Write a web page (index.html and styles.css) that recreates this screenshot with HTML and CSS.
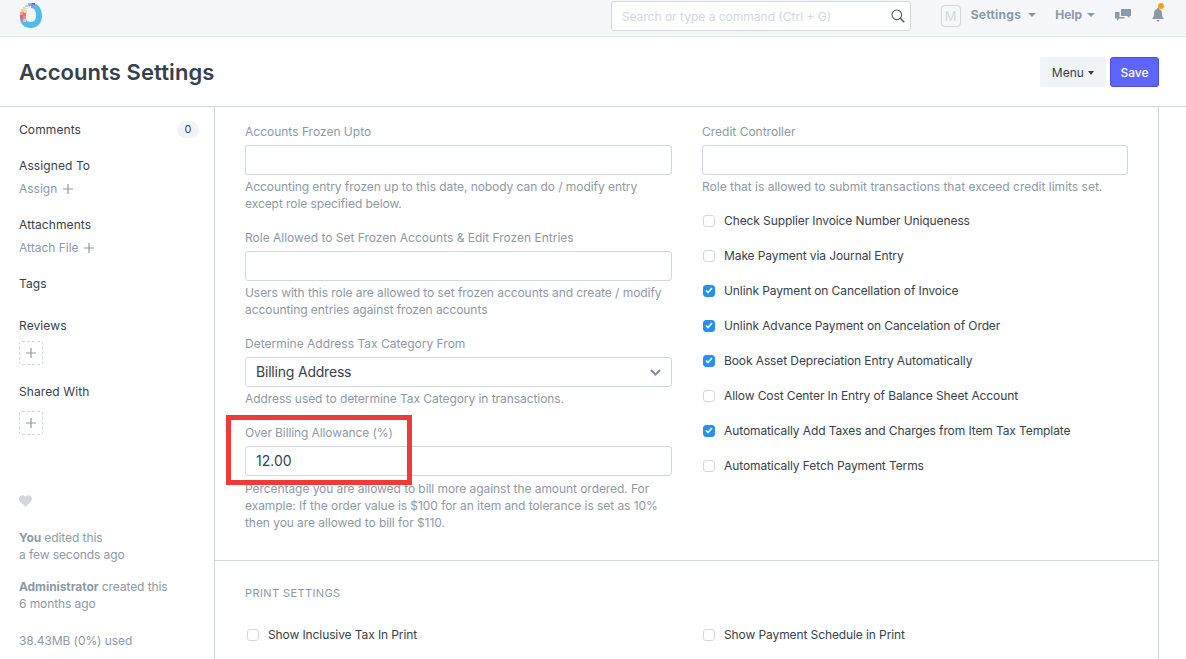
FILE: index.html
```html
<!DOCTYPE html>
<html lang="en">
<head>
<meta charset="utf-8">
<title>Accounts Settings</title>
<link rel="stylesheet" href="styles.css">
</head>
<body>
<header class="navbar">
  <svg class="logo" width="22" height="25" viewBox="0 0 22 25">
    <path fill-rule="evenodd" d="M11 0c6.500 0 11 5 11 13 0 7-4.500 12-11 12S0 21 0 15c0-4 1-6 3-9l4 1c-1 3-1 5-1 8 0 3 2 4 5 4s5-2 5-6.500C16 8 14.500 5 11 5z" fill="#4fbde8"/>
    <g>
      <rect x="0" y="12" width="3" height="3" fill="#ef5d6c"/><rect x="3" y="13" width="3" height="3" fill="#f48b93"/>
      <rect x="1" y="15" width="3" height="3" fill="#ef6f7c"/><rect x="3" y="16" width="3" height="3" fill="#f9b9bd"/>
      <rect x="0" y="9" width="3" height="3" fill="#f79aa0"/><rect x="3" y="10" width="3" height="3" fill="#f26d79"/>
      <rect x="1" y="6" width="3" height="3" fill="#f8c9a0"/><rect x="4" y="7" width="3" height="3" fill="#f9d9a8"/>
      <rect x="3" y="4" width="3" height="3" fill="#f6e08a"/><rect x="6" y="5" width="2" height="2" fill="#fff0b8"/>
      <rect x="5" y="2" width="3" height="2" fill="#a9e1d6"/><rect x="8" y="3" width="2" height="2" fill="#cfeee8"/>
      <rect x="8" y="0" width="3" height="3" fill="#9fa8ea"/><rect x="11" y="1" width="2" height="2" fill="#c56fdc"/>
      <rect x="12" y="0" width="3" height="2" fill="#b24fd0"/>
    </g>
  </svg>
  <div class="nav-right">
    <div class="search">
      <span class="search-text">Search or type a command (Ctrl + G)</span>
      <svg width="14" height="14" viewBox="0 0 14 14" fill="none" stroke="#4c5a67" stroke-width="1.100"><circle cx="5.800" cy="5.800" r="4.800"/><path d="M9.300 9.300l4 4" stroke-width="1.500"/></svg>
    </div>
    <div class="avatar">M</div>
    <span class="nav-link nav-settings">Settings <i class="caret"></i></span>
    <span class="nav-link nav-help">Help <i class="caret"></i></span>
    <svg class="nav-chat" width="16" height="12" viewBox="0 0 16 12" fill="#8d99a6"><path d="M6 0h10v7h-1.500v2L12 7H6z"/><path d="M0 3h4.500v5h5v1.500H4L2 12v-2.500H0z"/></svg>
    <span class="bell-wrap">
      <svg width="12" height="14" viewBox="0 0 12 14" fill="#8d99a6"><path d="M6 0c.8 0 1.200.5 1.200 1.100C9.200 1.700 10 3.300 10 5.500c0 2.500.6 3.500 2 5.500H0c1.400-2 2-3 2-5.500 0-2.200.8-3.800 2.800-4.400C4.800.5 5.200 0 6 0z"/><path d="M4.500 12h3C7.500 13 6.800 13.500 6 13.500S4.500 13 4.500 12z"/></svg>
      <i class="dot"></i>
    </span>
  </div>
</header>

<section class="page-head">
  <h1>Accounts Settings</h1>
  <div class="actions">
    <button class="btn btn-menu">Menu <i class="caret caret-dark"></i></button>
    <button class="btn btn-save">Save</button>
  </div>
</section>

<div class="layout">
  <aside class="sidebar">
    <div class="side-row comments"><span class="side-label">Comments</span><span class="badge">0</span></div>
    <div class="side-group assigned">
      <div class="side-label">Assigned To</div>
      <div class="side-action">Assign <svg class="plus" width="10" height="10" viewBox="0 0 10 10"><path d="M5 0v10M0 5h10"/></svg></div>
    </div>
    <div class="side-group attachments">
      <div class="side-label">Attachments</div>
      <div class="side-action">Attach File <svg class="plus" width="10" height="10" viewBox="0 0 10 10"><path d="M5 0v10M0 5h10"/></svg></div>
    </div>
    <div class="side-label tags">Tags</div>
    <div class="side-label reviews">Reviews</div>
    <div class="add-box"><svg class="plus" width="10" height="10" viewBox="0 0 10 10"><path d="M5 0v10M0 5h10"/></svg></div>
    <div class="side-label shared">Shared With</div>
    <div class="add-box add-box-shared"><svg class="plus" width="10" height="10" viewBox="0 0 10 10"><path d="M5 0v10M0 5h10"/></svg></div>
    <svg class="heart" width="13" height="12" viewBox="0 0 13 12" fill="#d1d8dd"><path d="M6.500 12L1 6.500C-.5 5-.3 2.500 1 1.200 2.500-.3 5-.2 6.500 1.800 8-.2 10.500-.3 12 1.200c1.300 1.300 1.500 3.800 0 5.300z"/></svg>
    <p class="meta meta-edit"><b>You</b> edited this<br>a few seconds ago</p>
    <p class="meta meta-created"><b>Administrator</b> created this<br>6 months ago</p>
    <p class="meta meta-used">38.43MB (0%) used</p>
  </aside>

  <main class="content">
    <section class="form-section first">
      <div class="col">
        <div class="field">
          <label>Accounts Frozen Upto</label>
          <div class="input"></div>
          <p class="help">Accounting entry frozen up to this date, nobody can do / modify entry except role specified below.</p>
        </div>
        <div class="field">
          <label>Role Allowed to Set Frozen Accounts &amp; Edit Frozen Entries</label>
          <div class="input"></div>
          <p class="help">Users with this role are allowed to set frozen accounts and create / modify accounting entries against frozen accounts</p>
        </div>
        <div class="field">
          <label>Determine Address Tax Category From</label>
          <div class="input select">Billing Address
            <svg width="11" height="7" viewBox="0 0 11 7" fill="none" stroke="#7f8c9a" stroke-width="2"><path d="M1 1l4.500 4.500L10 1"/></svg>
          </div>
          <p class="help">Address used to determine Tax Category in transactions.</p>
        </div>
        <div class="field highlighted">
          <label>Over Billing Allowance (%)</label>
          <div class="input">12.00</div>
          <p class="help">Percentage you are allowed to bill more against the amount ordered. For example: If the order value is $100 for an item and tolerance is set as 10% then you are allowed to bill for $110.</p>
          <div class="red-box"></div>
        </div>
      </div>
      <div class="col">
        <div class="field">
          <label>Credit Controller</label>
          <div class="input"></div>
          <p class="help help-wide">Role that is allowed to submit transactions that exceed credit limits set.</p>
        </div>
        <div class="checks">
          <div class="check"><i class="box"></i>Check Supplier Invoice Number Uniqueness</div>
          <div class="check"><i class="box"></i>Make Payment via Journal Entry</div>
          <div class="check"><i class="box on"><svg width="8" height="7" viewBox="0 0 8 7" fill="none" stroke="#fff" stroke-width="1.600"><path d="M1 3.500l2 2L7 1"/></svg></i>Unlink Payment on Cancellation of Invoice</div>
          <div class="check"><i class="box on"><svg width="8" height="7" viewBox="0 0 8 7" fill="none" stroke="#fff" stroke-width="1.600"><path d="M1 3.500l2 2L7 1"/></svg></i>Unlink Advance Payment on Cancelation of Order</div>
          <div class="check"><i class="box on"><svg width="8" height="7" viewBox="0 0 8 7" fill="none" stroke="#fff" stroke-width="1.600"><path d="M1 3.500l2 2L7 1"/></svg></i>Book Asset Depreciation Entry Automatically</div>
          <div class="check"><i class="box"></i>Allow Cost Center In Entry of Balance Sheet Account</div>
          <div class="check"><i class="box on"><svg width="8" height="7" viewBox="0 0 8 7" fill="none" stroke="#fff" stroke-width="1.600"><path d="M1 3.500l2 2L7 1"/></svg></i>Automatically Add Taxes and Charges from Item Tax Template</div>
          <div class="check"><i class="box"></i>Automatically Fetch Payment Terms</div>
        </div>
      </div>
    </section>
    <section class="print-section">
      <h2>PRINT SETTINGS</h2>
      <div class="print-row">
        <div class="check print-check print-left"><i class="box"></i>Show Inclusive Tax In Print</div>
        <div class="check print-check"><i class="box"></i>Show Payment Schedule in Print</div>
      </div>
    </section>
  </main>
</div>
</body>
</html>
```
FILE: styles.css
```css
* { box-sizing: border-box; }
html, body { margin: 0; padding: 0; height: 659px; overflow: hidden; }
body { font-family: Inter, "Liberation Sans", sans-serif; font-size: 12px; color: #36414c; background: #fff; }

.navbar { height: 37px; background: #f5f7fa; border-bottom: 1px solid #e5e9ee; display: flex; justify-content: space-between; align-items: flex-start; padding-left: 20px; }
.logo { margin-top: 3px; }
.nav-right { display: flex; align-items: flex-start; }
.search { width: 300px; height: 30px; margin-top: 1px; background: #fff; border: 1px solid #d1d8dd; border-radius: 3px; display: flex; align-items: center; justify-content: space-between; padding: 0 5px 0 10px; }
.search-text { color: #d1d8dd; font-size: 12px; }
.avatar { flex: none; width: 20px; height: 22px; margin: 5px 0 0 30px; border: 1px solid #d1d8dd; border-radius: 4px; background: #f5f7fa; color: #d1d8dd; font-size: 13px; line-height: 20px; text-align: center; }
.nav-link { font-weight: 700; color: #8d99a6; font-size: 12px; line-height: 30px; white-space: nowrap; }
.nav-settings { margin-left: 10px; letter-spacing: .25px; }
.nav-settings .caret { margin-left: 4px; }
.nav-help { margin-left: 19px; }
.caret { display: inline-block; width: 0; height: 0; border-left: 4px solid transparent; border-right: 4px solid transparent; border-top: 4px solid #8d99a6; vertical-align: 2px; margin-left: 2px; }
.caret-dark { border-top-color: #36414c; margin-left: 1px; border-left-width: 3.500px; border-right-width: 3.500px; }
.nav-chat { margin: 9px 0 0 20px; }
.bell-wrap { position: relative; margin: 8px 22px 0 21px; display: block; width: 12px; height: 14px; }
.dot { position: absolute; top: -5px; left: 6px; width: 6px; height: 6px; border-radius: 50%; background: #ffa00a; }

.page-head { height: 70px; border-bottom: 1px solid #d1d8dd; display: flex; justify-content: space-between; align-items: flex-start; padding: 0 27px 0 19px; }
.page-head h1 { margin: 21px 0 0; font-size: 22px; line-height: 28px; font-weight: 600; color: #36414c; letter-spacing: .08px; }
.actions { display: flex; gap: 4px; margin-top: 20px; }
.btn { height: 30px; border-radius: 3px; font-family: inherit; font-size: 12px; padding: 0; cursor: pointer; }
.btn-menu { width: 66px; border: 0; background: #f0f4f7; color: #36414c; }
.btn-save { width: 49px; border: 1px solid #4b4ddb; background: #5e64ff; color: #fff; font-weight: 500; }

.layout { display: flex; height: 552px; }
.sidebar { width: 215px; flex: none; border-right: 1px solid #d1d8dd; padding: 0 15px 0 19px; }
.side-label { font-weight: 400; color: #36414c; font-size: 12px; line-height: 16px; letter-spacing: .1px; }
.side-row { display: flex; justify-content: space-between; align-items: center; }
.comments { margin-top: 14px; height: 17px; }
.badge { width: 22px; height: 17px; border-radius: 9px; background: #f0f4f7; text-align: center; line-height: 17px; font-size: 11px; color: #36414c; }
.assigned { margin-top: 20px; }
.attachments { margin-top: 20px; }
.side-action { margin-top: 7px; color: #8d99a6; line-height: 16px; }
.plus { fill: none; stroke: #8d99a6; stroke-width: 1.200; margin-left: 2px; vertical-align: -1px; }
.tags { margin-top: 20px; }
.reviews { margin-top: 26px; }
.add-box { width: 24px; height: 24px; margin-top: 7px; border: 1px dashed #d1d8dd; border-radius: 3px; display: flex; align-items: center; justify-content: center; }
.add-box-shared { margin-top: 11px; }
.add-box .plus { margin: 0; }
.shared { margin-top: 19px; }
.heart { display: block; margin-top: 60px; }
.meta { margin: 0; color: #8d99a6; line-height: 17px; letter-spacing: -.08px; }
.meta b { font-weight: 700; }
.meta-edit { margin-top: 22px; }
.meta-created { margin-top: 15px; }
.meta-used { margin-top: 20px; }

.content { width: 944px; flex: none; border-right: 1px solid #d1d8dd; }
.form-section { display: grid; grid-template-columns: 427px 426px; column-gap: 30px; padding: 16px 30px 0; height: 454px; border-bottom: 1px solid #d1d8dd; }
.field { position: relative; margin-bottom: 17px; }
label { display: block; color: #8d99a6; font-size: 12px; line-height: 17px; margin-bottom: 5px; }
.highlighted label { letter-spacing: -.1px; }
.input { height: 30px; border: 1px solid #d1d8dd; border-radius: 3px; background: #fff; padding: 0 10px; font-size: 14px; line-height: 30px; color: #36414c; display: flex; justify-content: space-between; align-items: center; }
.select { letter-spacing: -.2px; }
.help { margin: 3px 0 0; color: #8d99a6; font-size: 12px; line-height: 17px; letter-spacing: -.06px; }
.help-wide { letter-spacing: 0; }
.highlighted .help { margin-top: 4px; }
.red-box { position: absolute; left: -19px; top: -9px; width: 186px; height: 70px; border: 5px solid #ef3a3a; pointer-events: none; }
.checks { margin-top: 16px; }
.check { display: flex; align-items: center; height: 17px; margin-bottom: 18px; color: #36414c; font-size: 12px; white-space: nowrap; letter-spacing: -.1px; }
.box { width: 12px; height: 12px; border: 1px solid #d1d8dd; border-radius: 3px; background: #fff; margin: 0 9px 0 1px; flex: none; display: flex; align-items: center; justify-content: center; }
.print-left .box { margin-left: 2px; }
.box.on { background: #2490ef; border-color: #2490ef; }
.print-section { padding: 25px 30px 0; }
.print-section h2 { margin: 0; font-size: 11px; line-height: 14px; font-weight: 400; color: #8d99a6; letter-spacing: .4px; }
.print-row { display: grid; grid-template-columns: 427px 426px; column-gap: 30px; margin-top: 26px; }
.print-check { margin: 0; }
```
